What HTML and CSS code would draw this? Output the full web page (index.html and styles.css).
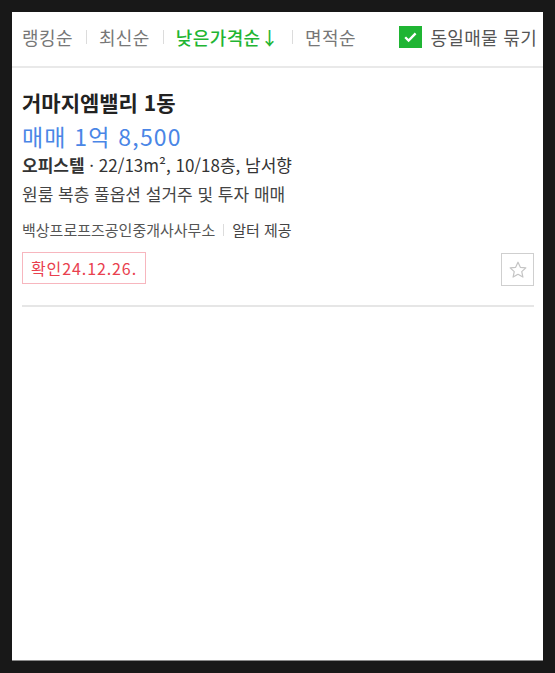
FILE: index.html
```html
<!DOCTYPE html>
<html lang="ko">
<head>
<meta charset="utf-8">
<link rel="stylesheet" href="styles.css">
</head>
<body>
<div class="panel">
  <div class="sortbar">
    <div class="tabs">
      <span class="tab">랭킹순</span>
      <span class="sep"></span>
      <span class="tab">최신순</span>
      <span class="sep"></span>
      <span class="tab active">낮은가격순↓</span>
      <span class="sep"></span>
      <span class="tab">면적순</span>
    </div>
    <label class="group">
      <span class="check"><svg width="23" height="22" viewBox="0 0 23 22"><rect width="23" height="22" fill="#1fb533"/><path d="M6.2 11.2l3.4 3.4 7-7.2" fill="none" stroke="#fff" stroke-width="2.3"/></svg></span>
      <span class="group-label">동일매물 묶기</span>
    </label>
  </div>
  <div class="item">
    <div class="title">거마지엠밸리 1동</div>
    <div class="price">매매 1억 8,500</div>
    <div class="spec"><strong>오피스텔</strong> · 22/13m², 10/18층, 남서향</div>
    <div class="desc">원룸 복층 풀옵션 설거주 및 투자 매매</div>
    <div class="agent"><span class="agent-name">백상프로프즈공인중개사사무소</span><span class="sep small"></span><span class="provider">알터 제공</span></div>
    <div class="bottom">
      <span class="tag">확인24.12.26.</span>
      <button class="star" aria-label="관심"><svg width="20" height="20" viewBox="0 0 20 20"><path d="M10 2.2l2.35 5.1 5.5.6-4.1 3.75 1.15 5.45L10 14.3l-4.9 2.8 1.15-5.45L2.15 7.9l5.5-.6z" fill="none" stroke="#c4c4c4" stroke-width="1.2" stroke-linejoin="round"/></svg></button>
    </div>
  </div>
</div>
</body>
</html>
```

FILE: styles.css
```css
html, body {
  margin: 0;
  padding: 0;
}
body {
  background: #181818;
  padding: 12px;
  font-family: "Noto Sans CJK KR", "Noto Sans", sans-serif;
  color: #222;
}
.panel {
  background: #fff;
  height: 649px;
  box-sizing: border-box;
  border-bottom: 1px solid #8a8a8a;
  overflow: hidden;
}
.sortbar {
  display: flex;
  align-items: center;
  justify-content: space-between;
  height: 49px;
  padding: 0 6px 5px 10px;
  border-bottom: 2px solid #e9e9e9;
}
.tabs {
  display: flex;
  align-items: center;
}
.tab {
  font-size: 18px;
  color: #777;
  letter-spacing: 0.4px;
}
.tab.active {
  color: #1fb533;
  font-weight: 500;
}
.sep {
  width: 1px;
  height: 14px;
  background: #dcdcdc;
  margin: 0 12px 0 13px;
}
.group {
  display: flex;
  align-items: center;
  gap: 9px;
  white-space: nowrap;
}
.check {
  display: flex;
}
.group-label {
  font-size: 18px;
  color: #555;
  letter-spacing: 0.3px;
}
.item {
  margin: 0 9px 0 10px;
  padding: 20px 0 19px;
  border-bottom: 2px solid #e6e6e6;
}
.title {
  font-size: 21px;
  font-weight: 700;
  color: #222;
  line-height: 28px;
}
.price {
  font-size: 23px;
  color: #4a86e6;
  line-height: 30px;
  margin-top: 5px;
  letter-spacing: 1.2px;
}
.spec {
  font-size: 17px;
  color: #333;
  line-height: 24px;
  margin-top: 2px;
}
.spec strong {
  font-weight: 700;
}
.desc {
  font-size: 17px;
  color: #444;
  line-height: 24px;
  margin-top: 5px;
}
.agent {
  display: flex;
  align-items: center;
  font-size: 15px;
  line-height: 22px;
  margin-top: 13px;
}
.agent-name {
  color: #555;
}
.sep.small {
  height: 12px;
  margin: 0 8px;
}
.provider {
  color: #444;
}
.bottom {
  display: flex;
  justify-content: space-between;
  align-items: flex-start;
  margin-top: 11px;
}
.tag {
  border: 1px solid #f7b6be;
  color: #e9404e;
  font-size: 16px;
  line-height: 30px;
  padding: 0 8px;
  letter-spacing: 0.9px;
}
.star {
  width: 33px;
  height: 33px;
  margin-top: 1px;
  border: 1px solid #cfcfcf;
  background: #fff;
  padding: 0;
  display: flex;
  align-items: center;
  justify-content: center;
}
```
